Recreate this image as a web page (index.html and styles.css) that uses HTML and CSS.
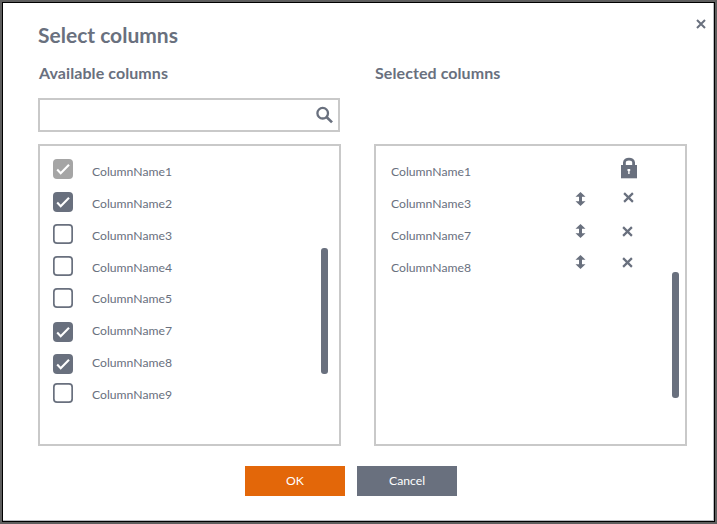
FILE: index.html
```html
<!DOCTYPE html>
<html lang="en">
<head>
<meta charset="utf-8">
<title>Select columns</title>
<link rel="stylesheet" href="styles.css">
</head>
<body>
<svg class="defs" width="0" height="0" aria-hidden="true">
  <symbol id="check" viewBox="0 0 20 20"><path d="M4.2 10.6 7.7 14.2 16 5.8" fill="none" stroke="#fff" stroke-width="2.1"/></symbol>
  <symbol id="cross" viewBox="0 0 10 10"><path d="M1 1 9 9M9 1 1 9" fill="none" stroke="currentColor" stroke-width="2"/></symbol>
  <symbol id="move" viewBox="0 0 10 14"><path d="M5 0 10 4.8H6.5V9.2H10L5 14 0 9.2H3.5V4.8H0Z" fill="currentColor"/></symbol>
</svg>
<main class="dialog">
  <button class="close" aria-label="Close"><svg width="10" height="10"><use href="#cross"/></svg></button>
  <h1>Select columns</h1>
  <div class="columns">
    <section class="available">
      <h2>Available columns</h2>
      <div class="search">
        <input type="text" aria-label="Search">
        <svg width="18" height="18" viewBox="0 0 18 18"><circle cx="7.7" cy="7.2" r="5.3" fill="none" stroke="currentColor" stroke-width="2.3"/><path d="M11.5 11 17 16.4" stroke="currentColor" stroke-width="2.6"/></svg>
      </div>
      <div class="panel">
        <ul>
          <li><span class="box locked"><svg><use href="#check"/></svg></span><span>ColumnName1</span></li>
          <li><span class="box on"><svg><use href="#check"/></svg></span><span>ColumnName2</span></li>
          <li><span class="box"></span><span>ColumnName3</span></li>
          <li><span class="box"></span><span>ColumnName4</span></li>
          <li class="raised"><span class="box"></span><span>ColumnName5</span></li>
          <li class="raised"><span class="box on low"><svg><use href="#check"/></svg></span><span>ColumnName7</span></li>
          <li class="raised"><span class="box on low"><svg><use href="#check"/></svg></span><span>ColumnName8</span></li>
          <li class="raised"><span class="box high"></span><span>ColumnName9</span></li>
        </ul>
        <div class="thumb"></div>
      </div>
    </section>
    <section class="selected">
      <h2>Selected columns</h2>
      <div class="panel">
        <ul>
          <li><span>ColumnName1</span><svg class="lock" width="16" height="22" viewBox="0 0 16 22"><path d="M3.4 9V5.5C3.4 .9 12.6 .9 12.6 5.5V9" fill="none" stroke="currentColor" stroke-width="2.8"/><path d="M0 8H16V21.3H0Z" fill="currentColor"/><path d="M6.5 12H9.2V14H8.6V17H7.2V14H6.5Z" fill="#fff"/></svg></li>
          <li><span>ColumnName3</span><svg class="move" width="11" height="14"><use href="#move"/></svg><svg class="remove" width="11" height="11"><use href="#cross"/></svg></li>
          <li><span>ColumnName7</span><svg class="move" width="11" height="14"><use href="#move"/></svg><svg class="remove" width="11" height="11"><use href="#cross"/></svg></li>
          <li><span>ColumnName8</span><svg class="move" width="11" height="14"><use href="#move"/></svg><svg class="remove" width="11" height="11"><use href="#cross"/></svg></li>
        </ul>
        <div class="thumb"></div>
      </div>
    </section>
  </div>
  <footer><button class="ok">OK</button><button class="cancel">Cancel</button></footer>
</main>
</body>
</html>
```
FILE: styles.css
```css
* { box-sizing: border-box; }
body {
  margin: 0;
  padding: 2px;
  height: 524px;
  background: #5e5e5e;
  color: #69707e;
  font: 12.2px/20px Lato, "Liberation Sans", sans-serif;
  overflow: hidden;
}
.defs { position: absolute; }
svg { display: block; }
button { border: 0; padding: 0; font: inherit; color: inherit; background: none; }
.dialog {
  position: relative;
  width: 713px;
  height: 520px;
  padding: 19px 0 0 35px;
  border: 1px solid #000;
  background: #fff;
  box-shadow: inset -1px -1px #b9bbc0;
}
.close { position: absolute; right: 8px; top: 16px; }
h1 { margin: 0; font-size: 21px; line-height: 26px; font-weight: 700; }
h2 { margin: 0; padding-left: 1px; font-size: 16px; line-height: 20px; font-weight: 700; letter-spacing: .08px; }
.columns { display: flex; gap: 33px; margin-top: 15px; }
.available { width: 303px; }
.selected { width: 313px; }
.search {
  display: flex;
  align-items: center;
  width: 302px;
  height: 34px;
  margin: 15px 0 12px;
  padding-right: 5px;
  border: 2px solid #c9c9c9;
}
.search input { flex: 1; min-width: 0; border: 0; outline: 0; background: none; font: inherit; color: inherit; }
.panel { position: relative; height: 302px; border: 2px solid #c9c9c9; padding-top: 10px; }
.selected .panel { margin-top: 61px; }
ul { list-style: none; margin: 0; padding: 0; }
li { display: flex; height: 32px; line-height: 32px; }
.available li { padding-left: 13px; gap: 19px; }
.raised { line-height: 30px; }
.box { width: 20px; height: 20px; margin-top: 4px; box-shadow: inset 0 0 0 1.7px #69707e; border-radius: 4px; flex: none; }
.box svg { width: 20px; height: 20px; }
.on { box-shadow: none; background: #69707e; }
.locked { box-shadow: none; background: #a5a5a5; margin-top: 3px; }
.low { margin-top: 6px; }
.high { margin-top: 3px; }
.selected li { padding-left: 15px; }
.selected li span { width: 184px; }
.lock { margin: 1px 0 0 46px; }
.move { margin-top: 4px; }
.remove { margin: 4px 0 0 37px; }
li:nth-child(3) .remove { margin: 6px 0 0 36px; }
li:nth-child(4) .move { margin-top: 3px; }
li:nth-child(4) .remove { margin: 5px 0 0 36px; }
.thumb { position: absolute; width: 7px; height: 126px; border-radius: 3px; background: #69707e; }
.available .thumb { right: 11px; top: 102px; }
.selected .thumb { right: 6px; top: 126px; }
footer { display: flex; gap: 12px; margin: 19.5px 0 0 207px; }
footer button { width: 100px; height: 30px; color: #fff; }
.ok { background: #e36709; }
.cancel { background: #69707e; }
```
